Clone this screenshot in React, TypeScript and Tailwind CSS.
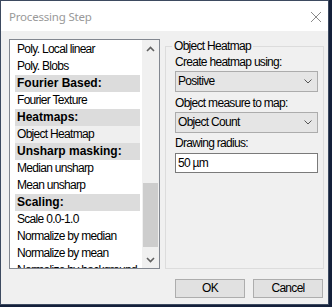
import React from 'react';

type Row = { label: string; header?: boolean; selected?: boolean };

const rows: Row[] = [
  { label: 'Poly. Local linear' },
  { label: 'Poly. Blobs' },
  { label: 'Fourier Based:', header: true },
  { label: 'Fourier Texture' },
  { label: 'Heatmaps:', header: true },
  { label: 'Object Heatmap', selected: true },
  { label: 'Unsharp masking:', header: true },
  { label: 'Median unsharp' },
  { label: 'Mean unsharp' },
  { label: 'Scaling:', header: true },
  { label: 'Scale 0.0-1.0' },
  { label: 'Normalize by median' },
  { label: 'Normalize by mean' },
  { label: 'Normalize by background' },
];

function Chevron({ up, className }: { up?: boolean; className?: string }) {
  return (
    <svg width="9" height="6" viewBox="0 0 9 6" className={className}>
      <path
        d={up ? 'M1 5 L4.5 1.5 L8 5' : 'M1 1 L4.5 4.5 L8 1'}
        fill="none"
        stroke="#606060"
        strokeWidth="1.6"
      />
    </svg>
  );
}

function Combo({ value }: { value: string }) {
  return (
    <div className="h-[21px] w-[143px] border border-[#acacac] bg-[#e5e5e5] flex items-center justify-between pl-[2px] pr-[5px]">
      <span className="leading-[17px]">{value}</span>
      <svg width="8" height="5" viewBox="0 0 8 5">
        <path d="M0.5 0.5 L4 4 L7.5 0.5" fill="none" stroke="#555" strokeWidth="1" />
      </svg>
    </div>
  );
}

export default function App() {
  return (
    <div className="w-[332px] h-[307px] bg-[#14203a] overflow-hidden font-['Liberation_Sans',Arial,sans-serif] text-[12px] tracking-[-0.7px] text-black">
      <div className="w-[329px] h-[305px] border border-[#3d4a60] bg-[#f0f0f0] flex flex-col">
        {/* title bar */}
        <div className="h-[30px] bg-white flex items-center justify-between pl-[8px] pr-[5px]">
          <span className="font-['Noto_Sans',sans-serif] text-[11.5px] tracking-[-0.2px] text-[#999999] mt-[1px]">
            Processing Step
          </span>
          <svg width="12" height="12" viewBox="0 0 12 12" className="mr-[1px] mt-[1px]">
            <path d="M1 1 L11 11 M11 1 L1 11" stroke="#8a8a8a" strokeWidth="1" />
          </svg>
        </div>

        <div className="flex-1 flex flex-col pl-[8px] pt-[8px]">
          <div className="flex items-start">
            {/* list box */}
            <div className="w-[151px] h-[230px] border border-[#828790] bg-white flex">
              <div className="flex-1 overflow-hidden pl-[5px] pr-[2px] pt-[1px]">
                {rows.map((r) => (
                  <div
                    key={r.label}
                    className={
                      'h-[17px] leading-[17px] pl-[2px] whitespace-nowrap ' +
                      (r.header ? 'bg-[#dcdcdc] font-bold tracking-[0px]' : r.selected ? 'bg-[#efefef]' : '')
                    }
                  >
                    {r.label}
                  </div>
                ))}
              </div>
              {/* scrollbar */}
              <div className="w-[17px] bg-[#f0f0f0] flex flex-col">
                <div className="h-[17px] flex items-center justify-center">
                  <Chevron up />
                </div>
                <div className="flex-1 px-[1px]">
                  <div className="mt-[126px] h-[64px] bg-[#cdcdcd]" />
                </div>
                <div className="h-[17px] flex items-center justify-center">
                  <Chevron />
                </div>
              </div>
            </div>

            {/* group box */}
            <div className="relative ml-[5px] mt-[7px] w-[159px] h-[223px] border border-[#dcdcdc] pl-[9px] pr-[5px] pt-[7px] flex flex-col">
              <span className="absolute -top-[9px] left-[6px] px-[2px] leading-[17px] bg-[#f0f0f0]">
                Object Heatmap
              </span>
              <div className="leading-[17px]">Create heatmap using:</div>
              <Combo value="Positive" />
              <div className="leading-[17px] mt-[3px]">Object measure to map:</div>
              <Combo value="Object Count" />
              <div className="leading-[17px] mt-[2px]">Drawing radius:</div>
              <div className="mt-[1px] h-[20px] w-[143px] border border-[#7a7a7a] bg-white pl-[2px] leading-[18px]">
                50 µm
              </div>
            </div>
          </div>

          <div className="flex justify-end gap-[8px] mr-[5px] mt-[10px]">
            <button className="w-[70px] h-[19px] border border-[#adadad] bg-[#e1e1e1] leading-[17px]">OK</button>
            <button className="w-[70px] h-[19px] border border-[#adadad] bg-[#e1e1e1] leading-[17px]">Cancel</button>
          </div>
        </div>
      </div>
    </div>
  );
}
